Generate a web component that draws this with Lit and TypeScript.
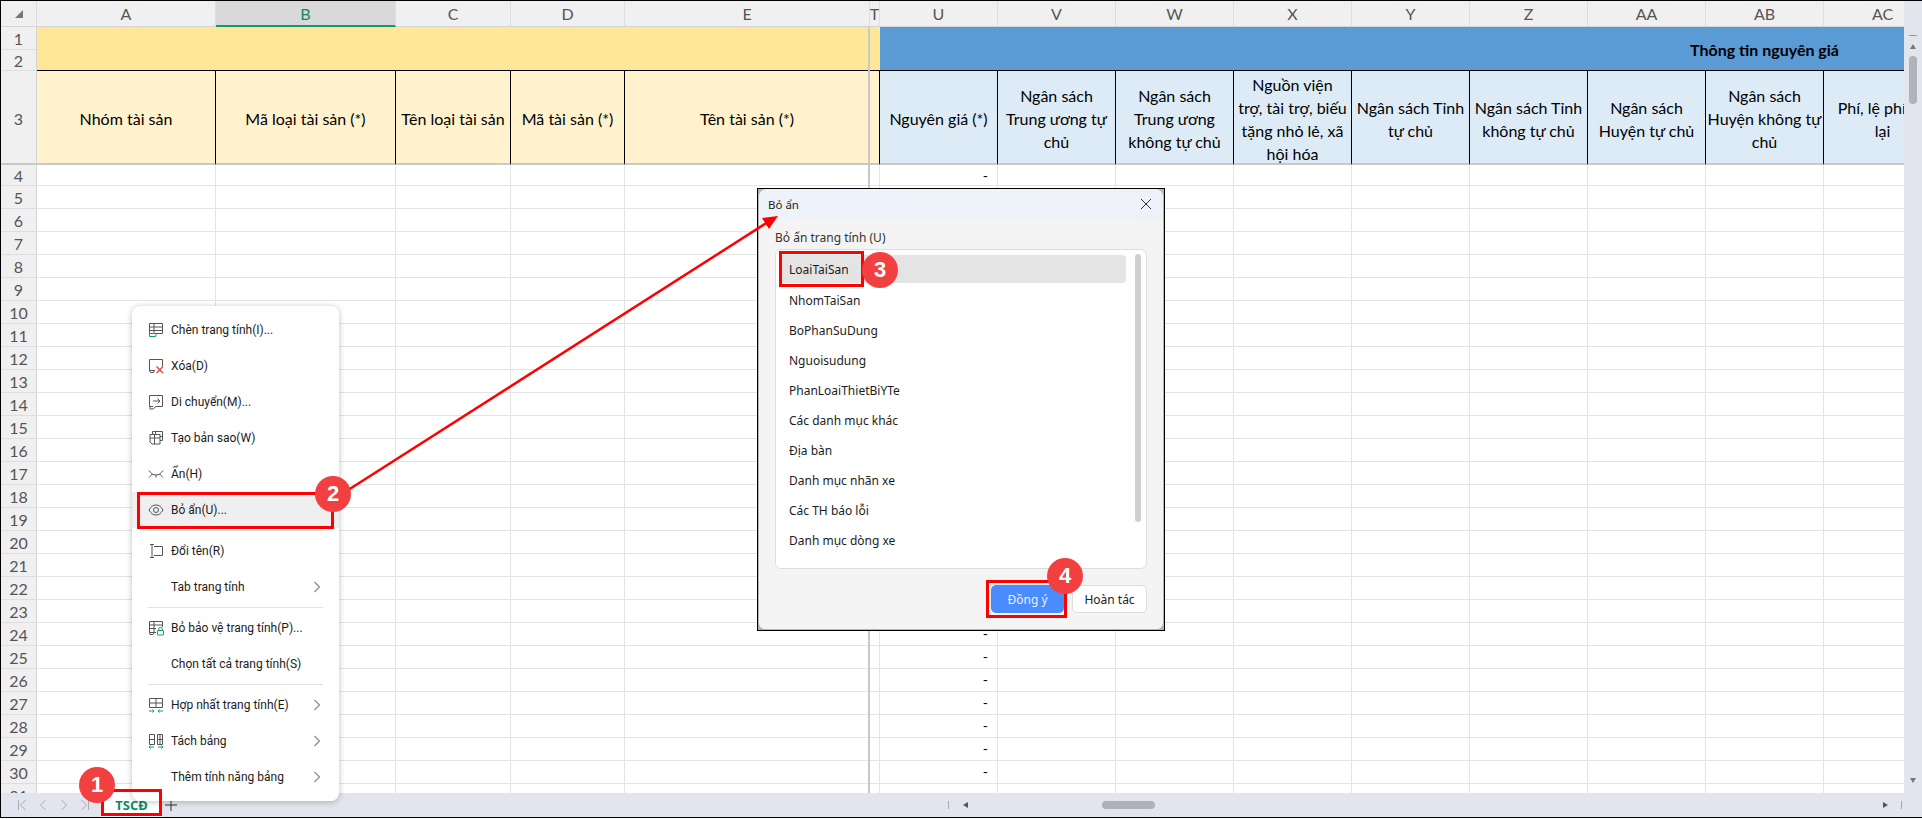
import { LitElement, html, css, svg } from "lit";
import { customElement } from "lit/decorators.js";

const COLS: [string, number][] = [
  ["A", 179], ["B", 180], ["C", 115], ["D", 114], ["E", 245], ["T", 10], ["U", 118], ["V", 118], ["W", 118],
  ["X", 118], ["Y", 118], ["Z", 118], ["AA", 118], ["AB", 118], ["AC", 118],
];
const HEAD = [
  "Nhóm tài sản", "Mã loại tài sản (*)", "Tên loại tài sản", "Mã tài sản (*)", "Tên tài sản (*)", "",
  "Nguyên giá (*)", "Ngân sách\nTrung ương tự\nchủ", "Ngân sách\nTrung ương\nkhông tự chủ",
  "Nguồn viện\ntrợ, tài trợ, biếu\ntặng nhỏ lẻ, xã\nhội hóa", "Ngân sách Tỉnh\ntự chủ", "Ngân sách Tỉnh\nkhông tự chủ",
  "Ngân sách\nHuyện tự chủ", "Ngân sách\nHuyện không tự\nchủ", "Phí, lệ phí để\nlại",
];
const DASH_ROWS = new Set([4, 5, 6, 24, 25, 26, 27, 28, 29, 30]);
const ROWS = Array.from({ length: 28 }, (_, i) => i + 4);
const template = `36px ${COLS.map((c) => c[1] + "px").join(" ")}`;

const I = (inner: unknown) => html`<svg class="ic" viewBox="0 0 16 16" fill="none" stroke="#555" stroke-width="1">${inner}</svg>`;
const ICONS: Record<string, unknown> = {
  insert: I(svg`<path d="M1.500 11.500V1.500h13v10H6M1.500 5h13M1.500 8.500h13M6 1.500v10"/><path d="M1.500 11.500h7l-1 3h-6z" stroke="#0f9d6e"/>`),
  del: I(svg`<path d="M7 12.500H1.500v-11h13v7M1.500 12.500l1 2h3l1-2"/><path d="M8.500 8.500l6.500 6.500M15 8.500L8.500 15" stroke="#e5383b" stroke-width="1.100"/>`),
  move: I(svg`<path d="M5 12.500H1.500v-11h13v11H8l-3 2.500H2v-2.500"/><path d="M5 7h7M9.500 4.500L12 7l-2.500 2.500"/>`),
  copy: I(svg`<path d="M4.500 4V1.500h10v9H12M2 4.500h10v9.500H4l-2-2zM2 8h10M6.500 4.500V14M7.500 1.500v3M12 6.500h2.500"/>`),
  hide: I(svg`<path d="M1 4.500c2 3 4 4.500 7 4.500s5-1.500 7-4.500M1 11.500L4.500 8M15 11.500L11.500 8M8 9v2.500"/>`),
  show: I(svg`<path d="M1 8c2-3.500 4-5 7-5s5 1.500 7 5c-2 3.500-4 5-7 5s-5-1.500-7-5z"/><circle cx="8" cy="8" r="2.500"/>`),
  rename: I(svg`<path d="M6 1.500H2M6 14.500H2M4 1.500v13M6 3.500h8.500v9H6"/>`),
  protect: I(svg`<path d="M8 12.500H1.500v-11h13V7M1.500 5h13M6 1.500V12.500M1.500 8.500H8M1.500 12.500l.5 2h3l1-2"/><rect x="9.500" y="10.500" width="6" height="4.500" rx=".5" stroke="#0f9d6e"/><path d="M10.800 10.500V9a1.700 1.700 0 0 1 3.400 0v1.500" stroke="#0f9d6e"/>`),
  merge: I(svg`<path d="M1.500 1.500h13v9h-13zM1.500 6h13M8 1.500v9"/><path d="M1 14h5M4.500 12.500L6 14l-1.500 1.500M15 14h-5M11.500 12.500L10 14l1.500 1.500" stroke="#0f9d6e"/>`),
  split: I(svg`<path d="M1.500 1.500h5v10h-5zM1.500 6.500h5M9.500 1.500h5v10h-5zM9.500 6.500h5M12 1.500v10"/><path d="M1 14h5M2.500 12.500L1 14l1.500 1.500M15 14h-5M13.500 12.500L15 14l-1.500 1.500" stroke="#0f9d6e"/>`),
};
const chevron = html`<svg class="chev" viewBox="0 0 8 12" fill="none" stroke="#888" stroke-width="1.100"><path d="M1.500 1l5 5-5 5"/></svg>`;

type Item = { t: string; i?: string; sub?: boolean; hover?: boolean } | null;
const MENU: Item[] = [
  { t: "Chèn trang tính(I)...", i: "insert" }, { t: "Xóa(D)", i: "del" }, { t: "Di chuyển(M)...", i: "move" },
  { t: "Tạo bản sao(W)", i: "copy" }, { t: "Ẩn(H)", i: "hide" }, { t: "Bỏ ẩn(U)...", i: "show", hover: true }, null,
  { t: "Đổi tên(R)", i: "rename" }, { t: "Tab trang tính", sub: true }, null,
  { t: "Bỏ bảo vệ trang tính(P)...", i: "protect" }, { t: "Chọn tất cả trang tính(S)" }, null,
  { t: "Hợp nhất trang tính(E)", i: "merge", sub: true }, { t: "Tách bảng", i: "split", sub: true },
  { t: "Thêm tính năng bảng", sub: true },
];
const SHEETS = ["LoaiTaiSan", "NhomTaiSan", "BoPhanSuDung", "Nguoisudung", "PhanLoaiThietBiYTe", "Các danh mục khác", "Địa bàn", "Danh mục nhãn xe", "Các TH báo lỗi", "Danh mục dòng xe"];
const BADGES: [number, number, number][] = [[1, 97, 785], [2, 333, 494], [3, 880, 270], [4, 1065, 576]];

@customElement("app-root")
export class AppRoot extends LitElement {
  static styles = css`
    :host { display: block; width: 1922px; height: 819px; position: relative; overflow: hidden; background: #fff; font-family: "Noto Sans", sans-serif; }
    .frame { display: flex; flex-direction: column; width: 1922px; height: 818px; border-top: 1px solid #000; border-left: 1px solid #000; border-bottom: 1px solid #000; box-sizing: border-box; }
    .main { flex: 1; display: flex; min-height: 0; }
    .sheet { width: 1903px; height: 792px; overflow: hidden; position: relative; flex: none; }
    .grid { display: grid; font-family: Lato, sans-serif; color: #000; width: max-content; }
    .ch { height: 26px; background: #f0f0f0; border-right: 1px solid #dedede; border-bottom: 1px solid #d4d4d4; box-sizing: border-box; display: flex; align-items: center; justify-content: center; color: #555; font-size: 16px; overflow: hidden; }
    .ch.sel { background: #d9d9d9; color: #0f8a64; border-bottom: 2px solid #0f9d6e; }
    .rh { background: #f0f0f0; border-right: 1px solid #d4d4d4; border-bottom: 1px solid #dedede; box-sizing: border-box; display: flex; align-items: center; justify-content: center; color: #555; font-size: 16px; }
    .r1 { height: 23px; } .r2 { height: 21px; } .r3 { height: 94px; border-bottom: 2px solid #c8c8c8; padding-top: 3px; }
    .corner { display: flex; align-items: center; justify-content: center; }
    .tri { width: 0; height: 0; border-style: solid; border-width: 0 0 8px 8px; border-color: transparent transparent #777 transparent; }
    .band { grid-row: span 2; border-bottom: 1px solid #000; box-sizing: border-box; }
    .yel { grid-column: span 6; background: #ffe699; }
    .blue { grid-column: span 9; background: #5b9bd5; display: flex; align-items: center; justify-content: flex-end; padding: 2px 103px 0 0; font-weight: 700; font-size: 16px; color: #000; }
    .hc { height: 94px; box-sizing: border-box; border-right: 1px solid #000; border-bottom: 2px solid #c8c8c8; display: flex; align-items: center; justify-content: center; text-align: center; font-size: 16px; line-height: 23px; padding-top: 3px; white-space: pre; overflow: hidden; }
    .hc.y { background: #fff2cc; }
    .hc.b { background: #ddebf7; }
    .c { box-sizing: border-box; border-right: 1px solid #e4e4e4; border-bottom: 1px solid #e4e4e4; font-size: 14px; text-align: right; padding-right: 9px; line-height: 22px; }
    .freeze { position: absolute; left: 867px; top: 26px; bottom: 0; width: 2px; background: #c8c8c8; }
    .vbar { width: 18px; flex: none; background: #e2e5ee; display: flex; flex-direction: column; align-items: center; position: relative; }
    .dash { width: 8px; height: 1px; background: #999; margin-top: 34px; }
    .ua { width: 0; height: 0; border: 3.500px solid transparent; border-bottom: 5px solid #777; border-top: none; margin-top: 8px; }
    .vthumb { width: 8px; height: 48px; background: #b0b3ba; border-radius: 4px; margin-top: 7px; }
    .da { width: 0; height: 0; border: 3.500px solid transparent; border-top: 5px solid #777; border-bottom: none; margin-top: auto; margin-bottom: 10px; }
    .bottom { height: 24px; flex: none; background: #e2e5ee; display: flex; align-items: center; position: relative; }
    .nav { width: 100px; display: flex; align-items: center; padding-left: 16px; gap: 11px; box-sizing: border-box; }
    .nav svg { width: 10px; height: 12px; }
    .tab { width: 61px; height: 24px; background: #fff; color: #0f8a64; font-weight: 700; font-size: 13px; display: flex; align-items: center; justify-content: center; }
    .plus { width: 14px; height: 14px; margin-left: 2px; }
    .hs { margin-left: auto; display: flex; align-items: center; width: 974px; height: 24px; padding-right: 20px; box-sizing: border-box; }
    .tick { width: 1px; height: 8px; background: #aaa; }
    .la { width: 0; height: 0; border: 3.500px solid transparent; border-right: 5px solid #555; border-left: none; margin-left: 14px; }
    .hthumb { width: 53px; height: 8px; background: #aeb1b8; border-radius: 4px; margin-left: 134px; }
    .ra { width: 0; height: 0; border: 3.500px solid transparent; border-left: 5px solid #555; border-right: none; margin-left: auto; margin-right: 13px; }

    .menu { position: absolute; left: 132px; top: 306px; width: 207px; height: 495px; box-sizing: border-box; padding: 6px 0; background: #fff; border-radius: 8px; box-shadow: 0 1px 6px rgba(0,0,0,.25); font-family: Roboto, sans-serif; font-size: 12px; color: #1c1c1c; display: flex; flex-direction: column; }
    .mi { height: 36px; flex: none; display: flex; align-items: center; padding-left: 16px; position: relative; }
    .mi.hover { background: #efefef; }
    .mi .ic { width: 16px; height: 16px; flex: none; }
    .mi .slot { width: 23px; flex: none; display: flex; }
    .chev { position: absolute; right: 18px; top: 12px; width: 8px; height: 12px; }
    .sep { height: 1px; background: #e2e2e2; margin: 2px 16px; flex: none; }

    .dialogframe { position: absolute; left: 757px; top: 188px; width: 408px; height: 443px; box-sizing: border-box; border: 1px solid #000; background: #b4b4b4; padding: 0 1px 1px; }
    .dialog { height: 100%; border-radius: 8px 8px 6px 6px; background: #f4f4f4; display: flex; flex-direction: column; font-size: 12px; color: #1c1c1c; overflow: hidden; }
    .dt { height: 31px; flex: none; background: linear-gradient(90deg, #eef3fb, #eef2f8); display: flex; align-items: center; justify-content: space-between; padding: 0 11px 1px 9px; box-sizing: border-box; font-size: 11.500px; }
    .dt svg { width: 12px; height: 12px; }
    .db { flex: 1; padding: 10px 16px 0 16px; display: flex; flex-direction: column; }
    .lbl { height: 20px; line-height: 16px; color: #333; }
    .list { height: 320px; box-sizing: border-box; background: #fff; border: 1px solid #ddd; border-radius: 6px; padding: 5px 0 0 5px; position: relative; margin-top: -1px; }
    .li { height: 30px; display: flex; align-items: center; padding-left: 8px; width: 345px; box-sizing: border-box; }
    .li.sel { background: #e4e4e4; border-radius: 4px; height: 28px; margin: 0 0 2px; }
    .lscroll { position: absolute; right: 5px; top: 4px; width: 6px; height: 268px; background: #d0d0d0; border-radius: 3px; }
    .actions { display: flex; justify-content: flex-end; gap: 8px; margin-top: 16px; }
    .btn { height: 28px; box-sizing: border-box; border-radius: 5px; display: flex; align-items: center; justify-content: center; font-size: 12px; font-family: inherit; padding: 0; }
    .ok { width: 73px; background: #4a8cff; color: #e8f0ff; border: none; }
    .no { width: 75px; background: #fff; border: 1px solid #ddd; color: #222; }

    .red { position: absolute; border: 3px solid #f00; box-sizing: border-box; pointer-events: none; }
    .badge { position: absolute; width: 36px; height: 36px; margin: -18px 0 0 -18px; border-radius: 50%; background: #f24040; color: #fff; font: 700 22px "Liberation Sans", sans-serif; display: flex; align-items: center; justify-content: center; }
    .arrow { position: absolute; left: 0; top: 0; pointer-events: none; }
  `;

  render() {
    return html`
      <div class="frame">
        <div class="main">
          <div class="sheet">
            <div class="grid" style="grid-template-columns:${template}">
              <div class="ch corner"><div class="tri"></div></div>
              ${COLS.map((c) => html`<div class="ch ${c[0] === "B" ? "sel" : ""}">${c[0]}</div>`)}
              <div class="rh r1">1</div>
              <div class="band yel"></div>
              <div class="band blue">Thông tin nguyên giá</div>
              <div class="rh r2">2</div>
              <div class="rh r3">3</div>
              ${HEAD.map((h, i) => html`<div class="hc ${i < 6 ? "y" : "b"}">${h}</div>`)}
              ${ROWS.map(
                (r) => html`<div class="rh" style="height:${r === 4 ? 21 : 23}px">${r}</div>
                  ${COLS.map((c) => html`<div class="c" style="height:${r === 4 ? 21 : 23}px">${c[0] === "U" && DASH_ROWS.has(r) ? "-" : ""}</div>`)}`
              )}
            </div>
            <div class="freeze"></div>
          </div>
          <div class="vbar"><div class="dash"></div><div class="ua"></div><div class="vthumb"></div><div class="da"></div></div>
        </div>
        <div class="bottom">
          <div class="nav">
            <svg viewBox="0 0 10 12" fill="none" stroke="#aaa"><path d="M1.500 1v10M8.500 1l-5 5 5 5"/></svg>
            <svg viewBox="0 0 10 12" fill="none" stroke="#aaa"><path d="M7.500 1l-5 5 5 5"/></svg>
            <svg viewBox="0 0 10 12" fill="none" stroke="#aaa"><path d="M2.500 1l5 5-5 5"/></svg>
            <svg viewBox="0 0 10 12" fill="none" stroke="#aaa"><path d="M8.500 1v10M1.500 1l5 5-5 5"/></svg>
          </div>
          <div class="tab">TSCĐ</div>
          <svg class="plus" viewBox="0 0 14 14" stroke="#333" fill="none"><path d="M7 1v12M1 7h12"/></svg>
          <div class="hs"><div class="tick"></div><div class="la"></div><div class="hthumb"></div><div class="ra"></div><div class="tick"></div></div>
        </div>
      </div>

      <div class="menu">
        ${MENU.map((m) =>
          m === null
            ? html`<div class="sep"></div>`
            : html`<div class="mi ${m.hover ? "hover" : ""}"><span class="slot">${m.i ? ICONS[m.i] : ""}</span>${m.t}${m.sub ? chevron : ""}</div>`
        )}
      </div>

      <div class="dialogframe">
        <div class="dialog">
          <div class="dt"><span>Bỏ ẩn</span><svg viewBox="0 0 12 12" stroke="#333" fill="none"><path d="M1 1l10 10M11 1L1 11"/></svg></div>
          <div class="db">
            <div class="lbl">Bỏ ẩn trang tính (U)</div>
            <div class="list">
              ${SHEETS.map((s, i) => html`<div class="li ${i === 0 ? "sel" : ""}">${s}</div>`)}
              <div class="lscroll"></div>
            </div>
            <div class="actions"><button class="btn ok">Đồng ý</button><button class="btn no">Hoàn tác</button></div>
          </div>
        </div>
      </div>

      <div class="red" style="left:101px;top:789px;width:61px;height:27px"></div>
      <div class="red" style="left:137px;top:492px;width:197px;height:37px"></div>
      <div class="red" style="left:779px;top:251px;width:85px;height:36px"></div>
      <div class="red" style="left:986px;top:580px;width:81px;height:38px"></div>

      <svg class="arrow" width="1922" height="819">
        <path d="M345 492L768 222" stroke="#f00" stroke-width="2.500" fill="none"/>
        <path d="M778 216L762 218L769 229z" fill="#f00"/>
      </svg>
      ${BADGES.map((b) => html`<div class="badge" style="left:${b[1]}px;top:${b[2]}px">${b[0]}</div>`)}
    `;
  }
}
